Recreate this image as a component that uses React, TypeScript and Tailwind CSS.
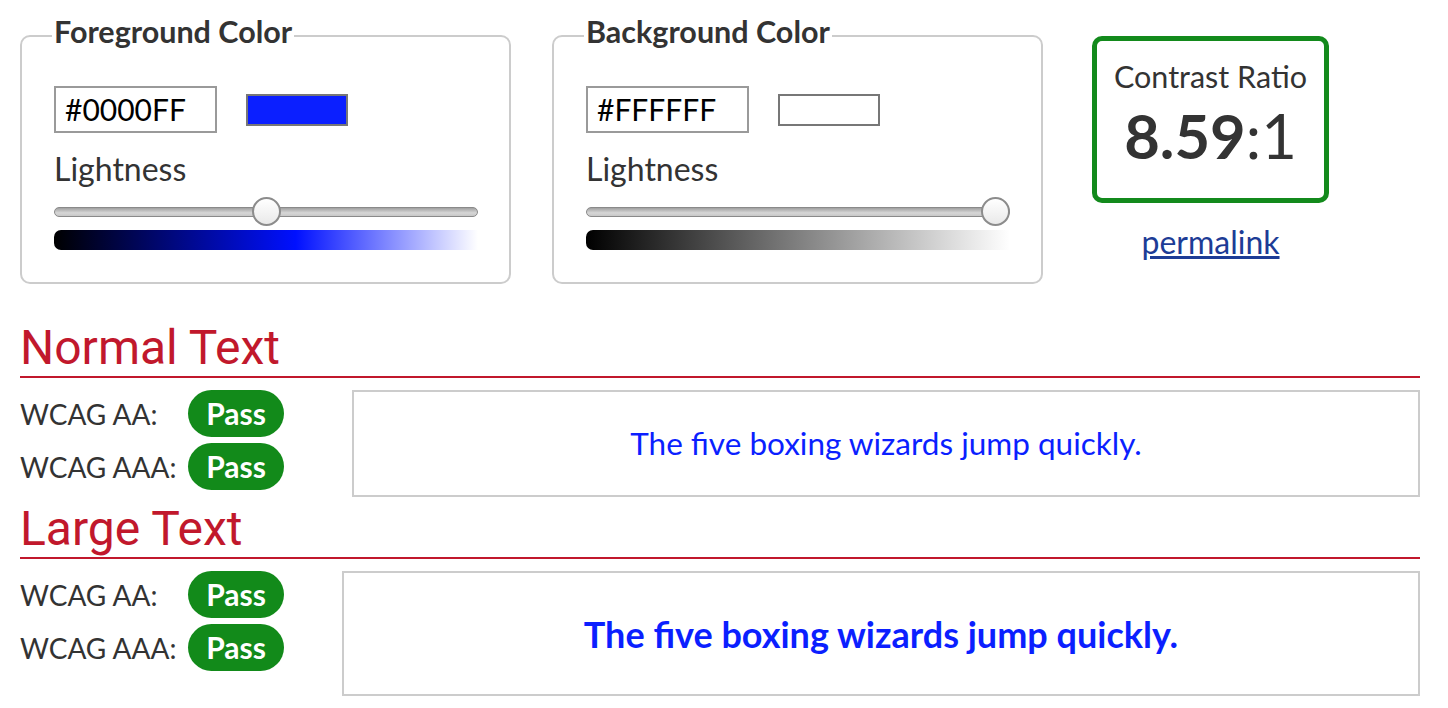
import React from "react";

const FONT = "font-['Lato','Liberation_Sans',sans-serif]";

function Slider({ pos }: { pos: number }) {
  return (
    <div className="relative h-[29px] w-[424px] flex items-center">
      <div className="h-[10px] w-full rounded-full border border-[#8a8a8a] bg-[linear-gradient(to_bottom,#a0a0a0,#d6d6d6_60%,#c8c8c8)]" />
      <div
        className="absolute top-0 h-[29px] w-[29px] rounded-full border-2 border-[#8c8c8c] bg-[linear-gradient(to_bottom,#ffffff,#e9e9e9)]"
        style={{ left: `${pos * (424 - 29)}px` }}
      />
    </div>
  );
}

function ColorBox({
  title,
  value,
  swatch,
  pos,
  gradient,
}: {
  title: string;
  value: string;
  swatch: string;
  pos: number;
  gradient: string;
}) {
  return (
    <fieldset className="w-[491px] rounded-[10px] border-2 border-[#cccccc] pl-[30px] pr-[30px] pb-[32px] pt-[28px]">
      <legend className="px-[2px] pb-[10px] text-[30.5px] leading-[34px] font-bold text-[#333]">{title}</legend>
      <div className="flex items-center">
        <div className="ml-[2px] flex h-[47px] w-[163px] items-center border-2 border-[#9a9a9a] pl-[9px] text-[30px] text-black">
          {value}
        </div>
        <div className={`ml-[29px] h-[32px] w-[102px] border-2 border-[#777] ${swatch}`} />
      </div>
      <div className="ml-[2px] mt-[17px] text-[32px] leading-[38px] text-[#333]">Lightness</div>
      <div className="ml-[2px] mt-[9px]">
        <Slider pos={pos} />
      </div>
      <div className={`ml-[2px] mt-[4px] h-[20px] w-[424px] rounded-l-[7px] ${gradient}`} />
    </fieldset>
  );
}

function Pill() {
  return (
    <div className="flex h-[47px] w-[96px] items-center justify-center rounded-full bg-[#128a1a] text-[30px] font-bold text-white">
      Pass
    </div>
  );
}

function Row({ label }: { label: string }) {
  return (
    <div className="flex items-center">
      <div className="w-[168px] text-[28px] text-[#333]">{label}</div>
      <Pill />
    </div>
  );
}

export default function App() {
  return (
    <div className={`${FONT} min-h-[708px] w-[1448px] overflow-hidden bg-white pl-[20px] pr-[28px] pt-[14px]`}>
      <div className="flex items-start">
        <ColorBox
          title="Foreground Color"
          value="#0000FF"
          swatch="bg-[#0b1fff]"
          pos={0.5}
          gradient="bg-[linear-gradient(to_right,#000000,#0010ff_57%,#ffffff)]"
        />
        <div className="ml-[41px]">
          <ColorBox
            title="Background Color"
            value="#FFFFFF"
            swatch="bg-white"
            pos={1}
            gradient="bg-[linear-gradient(to_right,#000000,#ffffff)]"
          />
        </div>
        <div className="ml-[49px] mt-[22px] flex flex-col items-center">
          <div className="flex h-[167px] w-[237px] flex-col items-center rounded-[10px] border-[5px] border-[#138a1c] pt-[17px] text-[#333]">
            <div className="text-[30.5px] leading-[36px]">Contrast Ratio</div>
            <div className="mt-[7px] text-[61.5px] leading-[68px]">
              <span className="font-bold">8.59</span>:1
            </div>
          </div>
          <a href="#" className="mt-[21px] text-[32px] leading-[36px] text-[#1d3c96] underline">
            permalink
          </a>
        </div>
      </div>

      <h2 className="mt-[35px] border-b-2 border-[#c1182c] font-['Roboto',sans-serif] text-[48px] leading-[57px] text-[#c1182c]">
        Normal Text
      </h2>
      <div className="mt-[12px] flex items-start">
        <div className="flex flex-col gap-[6px]">
          <Row label="WCAG AA:" />
          <Row label="WCAG AAA:" />
        </div>
        <div className="ml-[68px] flex h-[107px] flex-1 items-center justify-center border-2 border-[#cccccc] text-[31.5px] text-[#0b1fff]">
          The five boxing wizards jump quickly.
        </div>
      </div>

      <h2 className="mt-[3px] border-b-2 border-[#c1182c] font-['Roboto',sans-serif] text-[48px] leading-[57px] text-[#c1182c]">
        Large Text
      </h2>
      <div className="mt-[12px] flex items-start">
        <div className="flex flex-col gap-[6px]">
          <Row label="WCAG AA:" />
          <Row label="WCAG AAA:" />
        </div>
        <div className="ml-[58px] flex h-[125px] flex-1 items-center justify-center border-2 border-[#cccccc] text-[36px] font-bold text-[#0b1fff]">
          The five boxing wizards jump quickly.
        </div>
      </div>
    </div>
  );
}
